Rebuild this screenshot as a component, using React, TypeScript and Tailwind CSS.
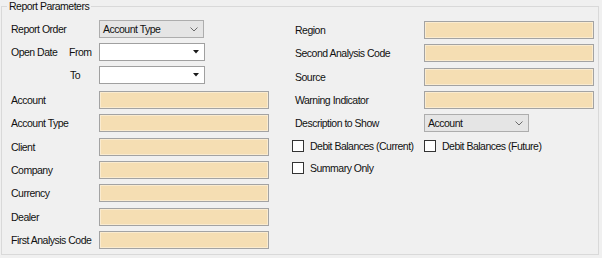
import React from 'react';

const Label: React.FC<{ text: string; className?: string }> = ({ text, className }) => (
  <span className={`whitespace-nowrap ${className ?? ''}`}>{text}</span>
);

const TextBox: React.FC = () => (
  <div className="h-[18px] w-[170px] border border-[#a3a3a3] bg-[#f5deb3] shadow-[inset_0_0_0_1px_#faebcf]" />
);

const Combo: React.FC<{ value: string }> = ({ value }) => (
  <div className="flex h-[18px] w-[105px] items-center justify-between border border-[#adadad] bg-[#e5e5e5] pl-[3px] pr-[5px]">
    <span>{value}</span>
    <svg width="8" height="5" viewBox="0 0 8 5">
      <polyline points="0.5,0.5 4,4 7.5,0.5" fill="none" stroke="#6b6b6b" strokeWidth="1" />
    </svg>
  </div>
);

const DatePicker: React.FC = () => (
  <div className="flex h-[18px] w-[106px] items-center justify-end border border-[#a0a0a0] bg-white pr-[5px]">
    <svg width="6" height="4" viewBox="0 0 6 4">
      <polygon points="0,0 6,0 3,3.5" fill="#1a1a1a" />
    </svg>
  </div>
);

const CheckBox: React.FC<{ text: string }> = ({ text }) => (
  <div className="flex items-center gap-[6px]">
    <div className="h-[12px] w-[12px] border border-[#333333] bg-white" />
    <span className="whitespace-nowrap">{text}</span>
  </div>
);

const leftFields = ['Account', 'Account Type', 'Client', 'Company', 'Currency', 'Dealer', 'First Analysis Code'];
const rightFields = ['Region', 'Second Analysis Code', 'Source', 'Warning Indicator'];

export default function App() {
  return (
    <div
      className="h-[258px] w-[602px] bg-[#f0f0f0] text-[10.5px] leading-[12px] tracking-[-0.5px] text-[#111]"
      style={{ fontFamily: '"Liberation Sans", Arial, sans-serif' }}
    >
      <fieldset className="ml-[1px] h-[255px] w-[598px] border border-[#d9d9d9]">
        <legend className="ml-[5px] px-[2px]">Report Parameters</legend>
        <div className="flex pl-[9px] pt-[8px]">
          {/* left column */}
          <div className="flex w-[258px] flex-col">
            <div className="flex h-[18px] items-center">
              <Label text="Report Order" className="w-[88px]" />
              <Combo value="Account Type" />
            </div>
            <div className="mt-[5px] flex h-[18px] items-center">
              <Label text="Open Date" className="w-[58px]" />
              <Label text="From" className="w-[30px]" />
              <DatePicker />
            </div>
            <div className="mt-[5px] flex h-[18px] items-center">
              <Label text="To" className="ml-[59px] w-[29px]" />
              <DatePicker />
            </div>
            <div className="mt-[7px] flex flex-col gap-[5.35px]">
              {leftFields.map((f) => (
                <div key={f} className="flex h-[18px] items-center">
                  <Label text={f} className="w-[88px]" />
                  <TextBox />
                </div>
              ))}
            </div>
          </div>

          {/* right column */}
          <div className="ml-[26px] flex flex-col pt-[1px]">
            <div className="flex flex-col gap-[5.3px]">
              {rightFields.map((f) => (
                <div key={f} className="flex h-[18px] items-center">
                  <Label text={f} className="w-[129px]" />
                  <TextBox />
                </div>
              ))}
              <div className="flex h-[18px] items-center">
                <Label text="Description to Show" className="w-[129px]" />
                <Combo value="Account" />
              </div>
            </div>
            <div className="ml-[-3px] mt-[8px] flex h-[12px] items-center">
              <div className="w-[132px]">
                <CheckBox text="Debit Balances (Current)" />
              </div>
              <CheckBox text="Debit Balances (Future)" />
            </div>
            <div className="ml-[-3px] mt-[10px] flex h-[12px] items-center">
              <CheckBox text="Summary Only" />
            </div>
          </div>
        </div>
      </fieldset>
    </div>
  );
}
